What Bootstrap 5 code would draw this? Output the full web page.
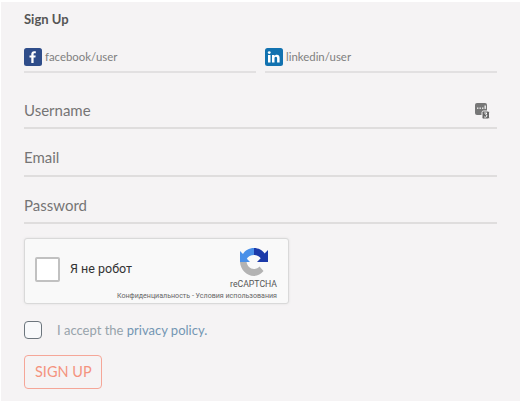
<!DOCTYPE html>
<html lang="en">
<head>
<meta charset="utf-8">
<title>Sign Up</title>
<link href="https://cdn.jsdelivr.net/npm/bootstrap@5.3.0/dist/css/bootstrap.min.css" rel="stylesheet">
<style>
html,body{background:#fff;height:401px;overflow:hidden}
body{font-family:"Lato","Liberation Sans",sans-serif;padding:2px 0 0 1px}
.su-panel{background:#f5f3f4;height:399px;padding:10px 23px 0 23px}
.su-title{font-size:13px;font-weight:700;color:#555;line-height:14px;margin:0 0 20px}
.su-social{gap:9px;margin-bottom:23px}
.su-social>div{flex:1 1 0;height:27px;border-bottom:2px solid #e2e0e1;display:flex;gap:3px;align-items:flex-start;padding-top:2px}
.su-social span{font-size:11.4px;color:#808080;line-height:18px;white-space:nowrap}
.su-field{height:33px;border-bottom:2px solid #dfdddd;font-size:15px;color:#757575;line-height:20px;padding-top:3.5px;margin-bottom:14.5px;display:flex;justify-content:space-between}
.su-field svg{margin:2px 7px 0 0}
.su-captcha{width:265px;height:66px;background:#f9f9f9;border:1px solid #d9d9d9;border-radius:3px;box-shadow:0 0 3px rgba(0,0,0,.08);padding:9px 11px 0 10px;margin-top:-1px;font-family:Roboto,"Liberation Sans",sans-serif}
.su-box{width:25px;height:25px;background:#fff;border:2px solid #c1c1c1;border-radius:2px;margin:2px 10px 0 0;flex:none}
.su-robot{font-size:12.5px;color:#333;white-space:nowrap;margin-top:3px}
.su-recap{font-size:8.7px;color:#555;line-height:10px;text-align:center;margin-top:3px}
.su-legal{font-size:7.1px;color:#666;line-height:8px;text-align:right;white-space:nowrap;margin-top:3px}
.su-check{width:18px;height:18px;border:1.5px solid #6c757d;border-radius:4px;background:#f8f9fb}
.su-accept{font-size:13px;color:#98a3ab;line-height:18px;margin-left:15px}
.su-accept a{color:#7396b3;text-decoration:none}
.su-btn{--bs-btn-color:#f4937f;--bs-btn-border-color:#f5a698;--bs-btn-padding-x:10px;--bs-btn-padding-y:0;--bs-btn-font-size:14.5px;--bs-btn-border-radius:4px;--bs-btn-line-height:32px;margin-top:16px;width:78px;white-space:nowrap}
.su-rowcheck{margin-top:17px}
</style>
</head>
<body>
<form class="su-panel">
  <p class="su-title">Sign Up</p>
  <div class="d-flex su-social">
    <div>
      <svg width="18" height="18" viewBox="0 0 18 18"><rect width="18" height="18" rx="2.5" fill="#2f4d8a"/><path d="M9.6 15V9.6h1.8l.3-2.1H9.6V6.2c0-.6.2-1 1-1h1.2V3.3c-.2 0-.9-.1-1.700-.1-1.700 0-2.800 1-2.800 2.900v1.400H5.500v2.100h1.800V15z" fill="#fff"/></svg>
      <span>facebook/user</span>
    </div>
    <div>
      <svg width="18" height="18" viewBox="0 0 18 18"><rect width="18" height="18" rx="2.500" fill="#1272b0"/><rect x="3" y="7" width="2.500" height="7.500" fill="#fff"/><circle cx="4.250" cy="4.600" r="1.450" fill="#fff"/><path d="M7 7h2.400v1.100c.4-.7 1.200-1.300 2.400-1.300 2.300 0 2.800 1.500 2.800 3.500v4.200H12.100v-3.700c0-.9 0-2-1.200-2s-1.400 1-1.400 1.900v3.800H7z" fill="#fff"/></svg>
      <span>linkedin/user</span>
    </div>
  </div>
  <div class="su-field"><span>Username</span>
    <svg width="16" height="18" viewBox="0 0 16 18"><rect x="1" y="1" width="12" height="12" rx="2" fill="#777"/><rect x="3" y="5.500" width="1.400" height="1.400" fill="#eee"/><rect x="5.500" y="5.500" width="1.400" height="1.400" fill="#eee"/><rect x="8" y="5.500" width="1.400" height="1.400" fill="#eee"/><rect x="10.500" y="3.500" width="1.400" height="3.400" fill="#eee"/><rect x="8" y="9" width="7.500" height="8" rx="1.500" fill="#666" stroke="#f5f3f4"/><path d="M10.300 11h2.600l-1.200 1.500c1.700.2 1.500 2.700-.3 2.700-.6 0-1-.2-1.300-.5" fill="none" stroke="#fff" stroke-width="1"/></svg>
  </div>
  <div class="su-field"><span>Email</span></div>
  <div class="su-field"><span>Password</span></div>
  <div class="su-captcha">
    <div class="d-flex align-items-center">
      <div class="su-box"></div>
      <div class="su-robot">Я не робот</div>
      <div class="ms-auto d-flex flex-column align-items-center">
        <svg width="28" height="28" viewBox="0 0 28 28">
          <path d="M14 0C9 0 5 2.500 3 6L0 3v11h10L6.800 10.800C8 8.300 10.800 7 14 7z" fill="#4a90e8"/>
          <path d="M14 0c4.500 0 8.400 2.200 10.600 5.500L28 2v12H17l3.700-3.700C19.500 8.500 17 7 14 7z" fill="#1c3aa9"/>
          <path d="M0 14h6.600c.5 4 3.500 7 7.400 7 2.500 0 4.200-1 5.500-2.500l4 4.500C21 25.600 18 28 14 28 6.500 28 .4 21.500 0 14z" fill="#b3b3b3"/>
        </svg>
        <div class="su-recap">reCAPTCHA</div>
      </div>
    </div>
    <div class="su-legal">Конфиденциальность - Условия использования</div>
  </div>
  <div class="d-flex align-items-center su-rowcheck">
    <div class="su-check"></div>
    <div class="su-accept">I accept the <a href="#">privacy policy.</a></div>
  </div>
  <button type="button" class="btn su-btn">SIGN UP</button>
</form>
<script src="https://cdn.jsdelivr.net/npm/bootstrap@5.3.0/dist/js/bootstrap.bundle.min.js"></script>
</body>
</html>
